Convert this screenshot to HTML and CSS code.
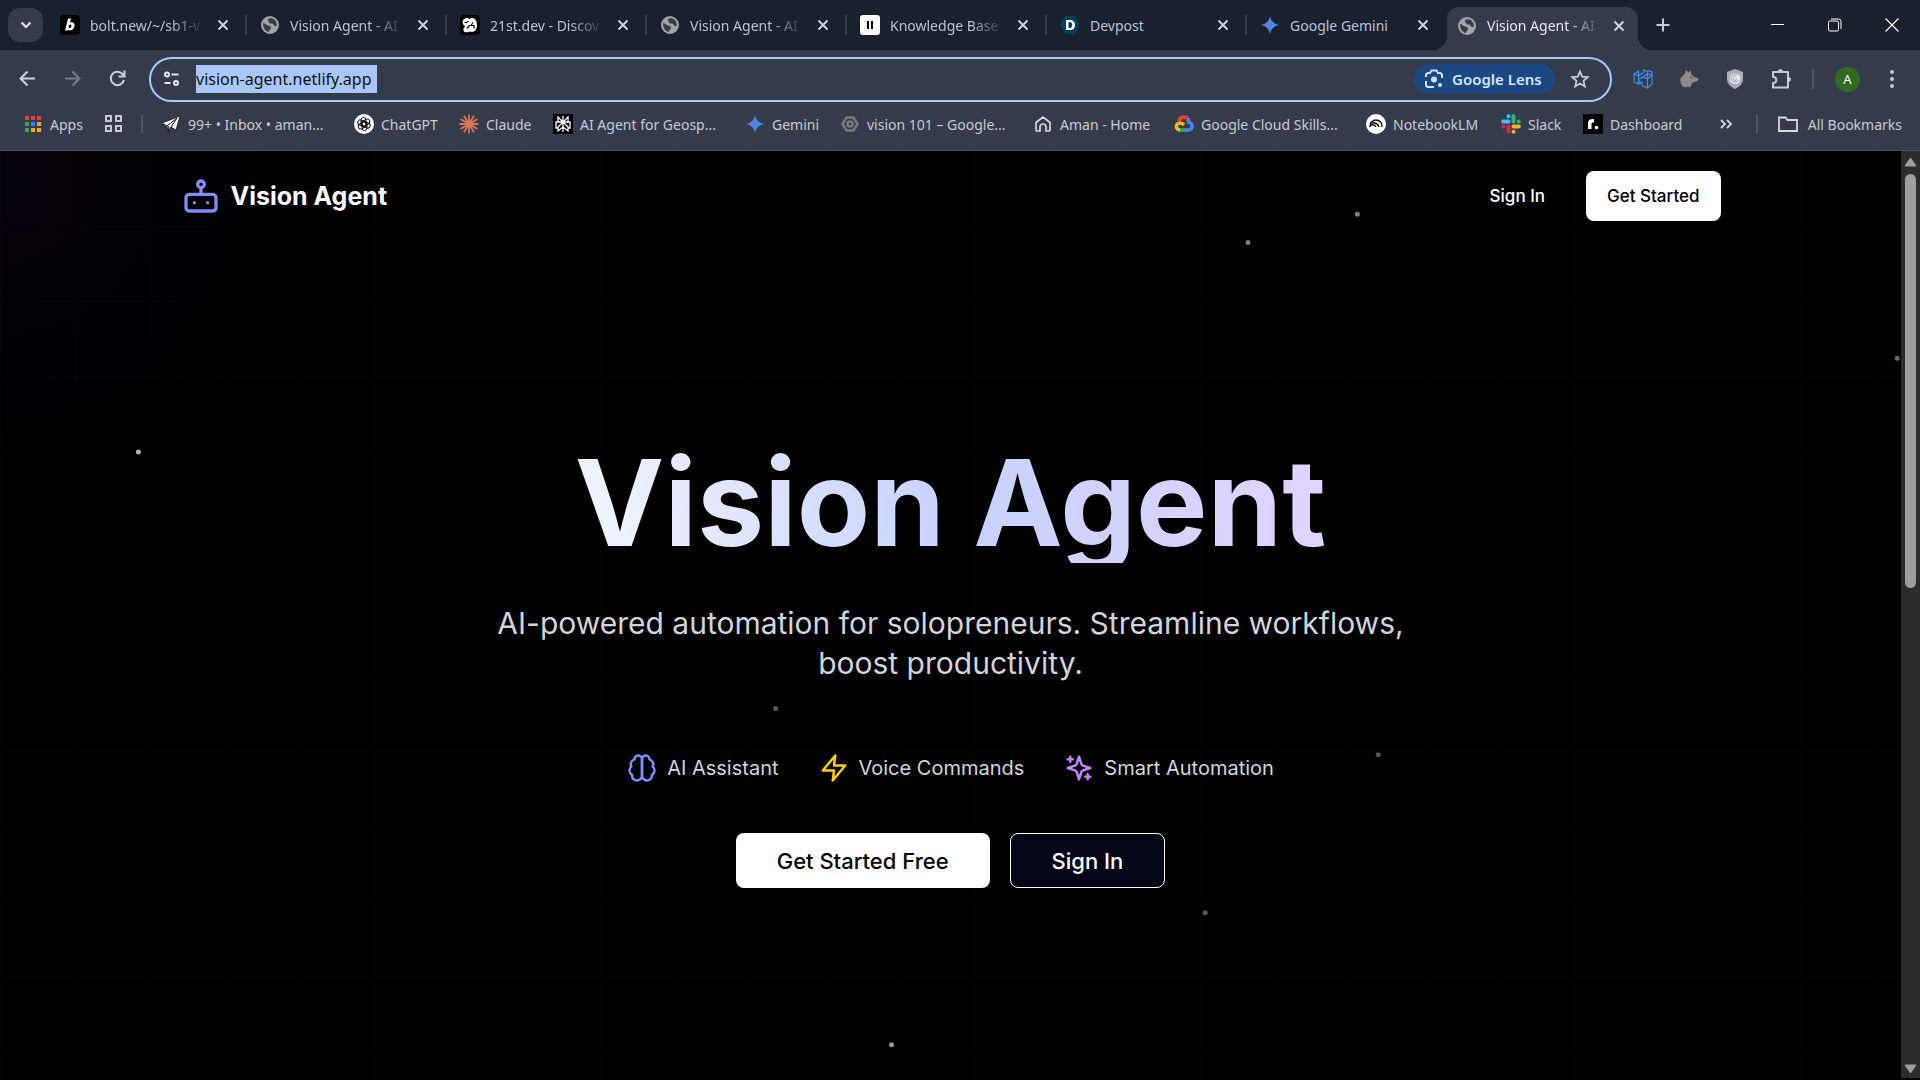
FILE: index.html
```html
<!DOCTYPE html>
<html lang="en">
  <head>
    <meta charset="UTF-8">
    <title>Vision Agent</title>
    <link rel="stylesheet" href="styles.css">
  </head>
  <body>
    <!-- shared icons -->
    <svg class="defs" width="0" height="0">
      <defs>
        <linearGradient id="gem" x1="0" y1="0" x2="1" y2="0">
          <stop offset="0" stop-color="#9b72cb"/>
          <stop offset="0.45" stop-color="#4a86e0"/>
          <stop offset="1" stop-color="#2fa5e8"/>
        </linearGradient>
      </defs>
      <symbol id="close" viewBox="0 0 16 16"><path d="M3.500 3.500l9 9M12.500 3.500l-9 9" stroke="currentColor" stroke-width="2" fill="none"/></symbol>
      <symbol id="globe" viewBox="0 0 20 20">
        <circle cx="10" cy="10" r="9" fill="#a0a3a8"/>
        <path d="M3 8c2.500 0 3 2.500 5 2.500s3 1 3 2.500-2 1.500-2 4C5.500 16.500 3 13 3 8zM10.500 3.200c-3 .3-3 2-2 3s.5 2.300 2 2.300h2c1 0 1 2.500 2.500 2.500h1.800C17 6.500 14.500 3 10.500 3.200z" fill="#343c4b"/>
      </symbol>
      <symbol id="gemini" viewBox="0 0 20 20"><path d="M10 1c.8 5 4 8.200 9 9-5 .8-8.200 4-9 9-.8-5-4-8.200-9-9 5-.8 8.200-4 9-9z" fill="url(#gem)"/></symbol>
    </svg>

    <header class="browser">
      <nav class="tab-strip" aria-label="Tabs">
        <button class="tab-search" aria-label="Search tabs"><svg viewBox="0 0 16 16" width="16" height="16"><path d="M3.500 5.500L8 10l4.500-4.500" stroke="#e3e6ed" stroke-width="2.200" fill="none"/></svg></button>
        <div class="tab">
          <svg class="favicon" viewBox="0 0 20 20"><rect width="20" height="20" rx="4" fill="#000"/><path d="M8 3.500h3l-1 4c3-1 5 .5 4.500 3.500-.5 4-4.500 5.500-6.500 3.500l-.4 1H5zM9 10.500c-.8 2.500.3 3 1.300 2.500 1.300-.7 1.700-3.500.3-3.500-.7 0-1.300.3-1.600 1z" fill="#fff" fill-rule="evenodd"/></svg>
          <a href="#" class="tab-title">bolt.new/~/sb1-v</a>
          <button class="tab-close" aria-label="Close tab"><svg width="16" height="16"><use href="#close"/></svg></button>
        </div>
        <div class="tab">
          <svg class="favicon"><use href="#globe"/></svg>
          <a href="#" class="tab-title">Vision Agent - AI</a>
          <button class="tab-close" aria-label="Close tab"><svg width="16" height="16"><use href="#close"/></svg></button>
        </div>
        <div class="tab">
          <svg class="favicon" viewBox="0 0 20 20"><rect width="20" height="20" rx="4" fill="#000"/><path d="M3.500 4.500c1.500-2 4.500-2 6-.5 3-2.500 7.500 0 7.500 6s-4 8-7 6.500c-3 1.500-6 1-6.500-1s.5-3 2-4.500C3 10.500 1.500 7 3.500 4.500z" fill="#fff"/><path d="M4.500 7.500q2.500.5 4-1.500M6.500 13q2 0 3-3M13 7.500L11 10.500h3v3" fill="none" stroke="#000" stroke-width="1.200"/></svg>
          <a href="#" class="tab-title">21st.dev - Discov</a>
          <button class="tab-close" aria-label="Close tab"><svg width="16" height="16"><use href="#close"/></svg></button>
        </div>
        <div class="tab">
          <svg class="favicon"><use href="#globe"/></svg>
          <a href="#" class="tab-title">Vision Agent - AI</a>
          <button class="tab-close" aria-label="Close tab"><svg width="16" height="16"><use href="#close"/></svg></button>
        </div>
        <div class="tab">
          <svg class="favicon" viewBox="0 0 20 20"><rect width="20" height="20" rx="3" fill="#fff"/><path d="M7 6h2v8H7zM11 6h2v8h-2z" fill="#000"/></svg>
          <a href="#" class="tab-title">Knowledge Base</a>
          <button class="tab-close" aria-label="Close tab"><svg width="16" height="16"><use href="#close"/></svg></button>
        </div>
        <div class="tab">
          <svg class="favicon" viewBox="0 0 20 20"><path d="M5 1h10l5 9-5 9H5l-5-9z" fill="#073f54"/><path d="M6 5h4c3 0 5 2 5 5s-2 5-5 5H6zM8.500 7v6H10c3 0 3-6 0-6z" fill="#fff" fill-rule="evenodd"/></svg>
          <a href="#" class="tab-title plain">Devpost</a>
          <button class="tab-close" aria-label="Close tab"><svg width="16" height="16"><use href="#close"/></svg></button>
        </div>
        <div class="tab tab-last">
          <svg class="favicon"><use href="#gemini"/></svg>
          <a href="#" class="tab-title plain">Google Gemini</a>
          <button class="tab-close" aria-label="Close tab"><svg width="16" height="16"><use href="#close"/></svg></button>
        </div>
        <div class="tab active">
          <svg class="favicon"><use href="#globe"/></svg>
          <a href="#" class="tab-title">Vision Agent - AI</a>
          <button class="tab-close" aria-label="Close tab"><svg width="16" height="16"><use href="#close"/></svg></button>
        </div>
        <button class="new-tab" aria-label="New tab"><svg width="16" height="16" viewBox="0 0 16 16"><path d="M8 1.500v13M1.500 8h13" stroke="#c3cbde" stroke-width="2"/></svg></button>
        <div class="window-controls">
          <button aria-label="Minimize"><svg width="14" height="14"><path d="M0 6.500h13" stroke="#fff"/></svg></button>
          <button aria-label="Restore"><svg width="14" height="14" viewBox="0 0 14 14" fill="none" stroke="#fff"><rect x="0.500" y="3" width="10" height="10" rx="1.500"/><path d="M3 1h7.500q2.500 0 2.500 2.500V11"/></svg></button>
          <button aria-label="Close"><svg width="14" height="14"><path d="M.5.5l13 13M13.500.5l-13 13" stroke="#fff" stroke-width="1.200"/></svg></button>
        </div>
      </nav>

      <div class="toolbar">
        <div class="nav-buttons">
          <button aria-label="Back"><svg width="20" height="20" fill="none" stroke="#c9d0e0" stroke-width="2"><path d="M17 9.500H3M9.500 2.500l-7 7 7 7"/></svg></button>
          <button aria-label="Forward"><svg width="20" height="20" fill="none" stroke="#767d8c" stroke-width="2"><path d="M2 9.500h14M9.500 2.500l7 7-7 7"/></svg></button>
          <button aria-label="Reload"><svg width="20" height="20" fill="none" stroke="#c9d0e0" stroke-width="2"><path d="M16 11a6.700 6.700 0 1 1-1.500-6l2 2M16.500 1.500v6h-6"/></svg></button>
        </div>
        <div class="omnibox">
          <svg width="16" height="16" fill="none" stroke="#e3e6ed" stroke-width="2"><circle cx="3" cy="3.500" r="2"/><path d="M7.500 3.500h7M.5 12h6"/><circle cx="12" cy="12" r="2"/></svg>
          <input class="url" type="text" aria-label="Address" value="vision-agent.netlify.app">
          <button class="lens">
            <svg width="20" height="20" fill="none" stroke="#d3e3fd" stroke-width="2"><path d="M2 8V6.500A2.500 2.500 0 0 1 4.500 4H6l1.500-2.500h5L14 4h1.500A2.500 2.500 0 0 1 18 6.500V9M2 12v3.500A2.500 2.500 0 0 0 4.500 18H10"/><circle cx="10" cy="10.500" r="3" fill="#d3e3fd" stroke="none"/><circle cx="16" cy="16" r="2" fill="#d3e3fd" stroke="none"/></svg>
            Google Lens
          </button>
          <button class="star" aria-label="Bookmark this tab"><svg width="20" height="20" fill="none" stroke="#c9d0e0" stroke-width="1.700"><path d="M10 2.500l2.200 5.200 5.600.5-4.300 3.700 1.300 5.500L10 14.500l-4.800 2.900 1.300-5.500L2.200 8.200l5.600-.5z"/></svg></button>
        </div>
        <div class="extensions">
          <button aria-label="Boxes extension"><svg width="20" height="20" fill="none" stroke="#3c8cf5" stroke-width="1.200"><path d="M1 5l4.500 2v8L1 13zM1 5l4.500-3v5l5-3.500M5.500 10.500L10 8l4.500 2v9L10 17zM10 8l4.500-3.500L19 6l-4.500 4M19 6v9l-4.500 4M5.500 15l4.500-2M5.500 10.500V7l5-3.500V1l4 1.500v7.500M15 1.500l4 1.500v3"/></svg></button>
          <button aria-label="Fox extension"><svg width="20" height="20"><path d="M3.500 17.500q-3-5-2-8.500l4-4 1.500-4 2.500 2.500L11.500 1.500l1 4 2.500 2.500 4.500 1.500-1 2.500-5 1.500q-2 3.500-2.500 5.500l-2-2-1.500 1.500z" fill="#8f8b87"/><path d="M11 8l2 .8" stroke="#45423f"/></svg></button>
          <button aria-label="Shield extension"><svg width="20" height="20"><path d="M10 0l8 3v7c0 5-4 8-8 10-4-2-8-5-8-10V3z" fill="#a9adb4"/><circle cx="10" cy="9.500" r="5.500" fill="#e7e9ec"/><path d="M13 6.500a4 4 0 1 0 .5 4.500M12 10a2 2 0 1 1-1-2.500" fill="none" stroke="#999da5"/></svg></button>
          <button aria-label="Extensions"><svg width="20" height="20" viewBox="0 0 20 20" fill="none" stroke="#c3cbde" stroke-width="2"><path d="M2 3h15v15.500H2V14c4.500 0 4.500-6 0-6z" stroke-linejoin="round"/><path d="M7.500 2.500a2 2 0 0 1 4 0zM17.500 8.500a2 2 0 0 1 0 4z" fill="#c3cbde" stroke-width="1"/></svg></button>
        </div>
        <span class="divider"></span>
        <button class="avatar" aria-label="Profile">A</button>
        <button class="menu" aria-label="Menu"><svg width="4" height="18" fill="#c3cbde"><circle cx="2" cy="2" r="2"/><circle cx="2" cy="9" r="2"/><circle cx="2" cy="16" r="2"/></svg></button>
      </div>

      <nav class="bookmarks" aria-label="Bookmarks">
        <a href="#"><svg viewBox="0 0 20 20"><path d="M2 2h4v4H2zM8 2h4v4H8zM14 2h4v4h-4z" fill="#ea4335"/><path d="M2 8h4v4H2zM2 14h4v4H2z" fill="#34a853"/><path d="M8 8h4v4H8z" fill="#1a8cff"/><path d="M14 8h4v4h-4zM8 14h4v4H8zM14 14h4v4h-4z" fill="#f9ab00"/></svg>Apps</a>
        <a href="#" aria-label="Tab groups"><svg viewBox="0 0 20 20" fill="none" stroke="#c4c8d2" stroke-width="2"><path d="M3 2h5v5H3zM13 2h5v5h-5zM3 12h5v5H3zM13 12h5v5h-5z"/></svg></a>
        <span class="divider"></span>
        <a href="#"><svg viewBox="0 0 20 20"><path d="M1 9L19 2l-4 14-5-3-3 5-1-6z" fill="#fff" stroke="#111" stroke-width="0.800"/><path d="M6 12l10-8-6 9M7 18l1-6" fill="none" stroke="#111"/></svg>99+ • Inbox • aman...</a>
        <a href="#"><svg viewBox="0 0 20 20"><circle cx="10" cy="10" r="10" fill="#fff"/><g fill="none" stroke="#111"><rect x="7" y="3.500" width="5" height="9" rx="2.500"/><rect x="7" y="3.500" width="5" height="9" rx="2.500" transform="rotate(60 10 10)"/><rect x="7" y="3.500" width="5" height="9" rx="2.500" transform="rotate(120 10 10)"/><rect x="7" y="3.500" width="5" height="9" rx="2.500" transform="rotate(180 10 10)"/><rect x="7" y="3.500" width="5" height="9" rx="2.500" transform="rotate(240 10 10)"/><rect x="7" y="3.500" width="5" height="9" rx="2.500" transform="rotate(300 10 10)"/></g></svg>ChatGPT</a>
        <a href="#"><svg viewBox="0 0 20 20" stroke="#d97757" stroke-width="1.800"><path d="M10 0.500v19M0.500 10h19M5 1.800l10 16.400M15 1.800L5 18.200M1.500 5l17 10M18.500 5l-17 10"/></svg>Claude</a>
        <a href="#"><svg viewBox="0 0 20 20"><rect width="20" height="20" fill="#000"/><path d="M10 2v16M5 3l5 5 5-5v5H5zM5 8H3v6h2M15 8h2v6h-2M10 8l-5 5v4l5-4 5 4v-4z" fill="none" stroke="#fff" stroke-width="1.300"/></svg>AI Agent for Geosp...</a>
        <a href="#"><svg><use href="#gemini"/></svg>Gemini</a>
        <a href="#"><svg viewBox="0 0 20 20" fill="none" stroke="#777a7f" stroke-width="2.500"><path d="M6.500 3.500h7l4 6.500-4 6.500h-7L2.500 10z"/><circle cx="10" cy="10" r="2.500"/></svg>vision 101 – Google...</a>
        <a href="#"><svg viewBox="0 0 20 20" fill="none" stroke="#d5d8de" stroke-width="1.700"><path d="M3 8.500L10 3l7 5.500V16q0 1-1 1h-3v-4a3 3 0 0 0-6 0v4H4q-1 0-1-1z"/></svg>Aman - Home</a>
        <a href="#"><svg viewBox="0 0 20 20" fill="none" stroke-width="3.600"><path d="M5 7c1-5 8-5 9.500-1" stroke="#ea4335"/><path d="M13.500 5c1 1 1.500 2 1.500 3.500 4.500.5 4 7.500-1 7.500h-3" stroke="#4285f4"/><path d="M12 16H5" stroke="#34a853"/><path d="M6 16c-4.500 0-5-7 0-7 2 0 3 1 4 2" stroke="#fbbc04"/></svg>Google Cloud Skills...</a>
        <a href="#"><svg viewBox="0 0 20 20"><circle cx="10" cy="10" r="10" fill="#fff"/><path d="M4 13v-1a6 6 0 0 1 12 0v1M4 9.500a6 5 0 0 1 9 3.500M4 12a3.500 3.500 0 0 1 6 1" fill="none" stroke="#111" stroke-width="1.400"/></svg>NotebookLM</a>
        <a href="#"><svg viewBox="0 0 20 20" fill="none" stroke-width="4" stroke-linecap="round"><path d="M2.200 7.500h5.300M7.500 2.300h.1" stroke="#36c5f0"/><path d="M12.500 2.200v5.300M17.700 7.500h.1" stroke="#2eb67d"/><path d="M12.500 12.600h5.300M12.500 17.800h.1" stroke="#ecb22e"/><path d="M7.500 12.600v5.200M2.300 12.600h.1" stroke="#e01e5a"/></svg>Slack</a>
        <a href="#"><svg viewBox="0 0 20 20"><rect width="20" height="20" fill="#000"/><path d="M5 15V9q0-4 5-4h1v3.500H9.500Q8.500 8.500 8.500 10v5z" fill="#fff"/><circle cx="13.500" cy="13.500" r="1.800" fill="#fff"/></svg>Dashboard</a>
        <div class="bookmarks-end">
          <button aria-label="More bookmarks"><svg viewBox="0 0 20 20" fill="none" stroke="#d5d8de" stroke-width="1.800"><path d="M5 6l4 4-4 4M11 6l4 4-4 4"/></svg></button>
          <span class="divider"></span>
          <a href="#"><svg viewBox="0 0 20 20" fill="none" stroke="#d5d8de" stroke-width="1.800"><path d="M1 3.500h6.500l2 2.500H19v11H1z"/></svg>All Bookmarks</a>
        </div>
      </nav>
    </header>

    <div class="viewport">
      <div class="page">
        <svg class="particles" fill="#fff">
          <circle cx="71.400%" cy="6.800%" r="2.500" opacity="0.500"/>
          <circle cx="65.650%" cy="9.850%" r="2.500" opacity="0.500"/>
          <circle cx="99.800%" cy="22.300%" r="2.500" opacity="0.400"/>
          <circle cx="7.280%" cy="32.400%" r="2.500" opacity="0.700"/>
          <circle cx="40.800%" cy="60%" r="2.500" opacity="0.350"/>
          <circle cx="72.500%" cy="65%" r="2.500" opacity="0.350"/>
          <circle cx="63.400%" cy="82%" r="2.500" opacity="0.350"/>
          <circle cx="46.900%" cy="96.200%" r="2.500" opacity="0.600"/>
        </svg>
        <header class="site-header">
          <a href="#" class="logo">
            <svg class="icon-bot" viewBox="0 0 24 24"><rect x="3" y="11" width="18" height="10" rx="2"/><circle cx="12" cy="5" r="2"/><path d="M12 7v4M8 16v.01M16 16v.01"/></svg>
            Vision Agent
          </a>
          <div class="site-nav">
            <button class="btn btn-ghost">Sign In</button>
            <button class="btn btn-light">Get Started</button>
          </div>
        </header>

        <main class="hero">
          <h1>Vision Agent</h1>
          <p class="tagline">AI-powered automation for solopreneurs. Streamline workflows, boost productivity.</p>
          <ul class="features">
            <li>
              <svg class="indigo" viewBox="0 0 24 24"><path d="M12 5a3 3 0 1 0-5.997.125 4 4 0 0 0-2.526 5.770 4 4 0 0 0 .556 6.588A4 4 0 1 0 12 18Z"/><path d="M12 5a3 3 0 1 1 5.997.125 4 4 0 0 1 2.526 5.770 4 4 0 0 1-.556 6.588A4 4 0 1 1 12 18Z"/></svg>
              AI Assistant
            </li>
            <li>
              <svg class="yellow" viewBox="0 0 24 24"><path d="M13 2L3 14h9l-1 8 10-12h-9z"/></svg>
              Voice Commands
            </li>
            <li>
              <svg class="purple" viewBox="0 0 24 24"><path d="m12 3-1.912 5.813a2 2 0 0 1-1.275 1.275L3 12l5.813 1.912a2 2 0 0 1 1.275 1.275L12 21l1.912-5.813a2 2 0 0 1 1.275-1.275L21 12l-5.813-1.912a2 2 0 0 1-1.275-1.275Z"/><path d="M5 3v4M19 17v4M3 5h4M17 19h4"/></svg>
              Smart Automation
            </li>
          </ul>
          <div class="actions">
            <button class="btn btn-light btn-lg">Get Started Free</button>
            <button class="btn btn-outline btn-lg">Sign In</button>
          </div>
        </main>
      </div>
      <div class="scrollbar">
        <svg width="13" height="10"><path d="M6.500 1L12 9H1z" fill="#9f9f9f" stroke="#9f9f9f" stroke-linejoin="round"/></svg>
        <div class="track"><div class="thumb"></div></div>
        <svg width="13" height="10"><path d="M6.500 9L12 1H1z" fill="#9f9f9f" stroke="#9f9f9f" stroke-linejoin="round"/></svg>
      </div>
    </div>
  </body>
</html>
```
FILE: styles.css
```css
* {
  box-sizing: border-box;
}

body {
  margin: 0;
  min-height: 100vh;
  display: flex;
  flex-direction: column;
  background: #000;
  font-family: Inter, "Liberation Sans", sans-serif;
}

button {
  padding: 0;
  border: none;
  background: none;
  color: inherit;
  font: inherit;
  cursor: pointer;
}

a {
  color: inherit;
  text-decoration: none;
}

svg {
  display: block;
  flex-shrink: 0;
}

.defs {
  position: absolute;
}

/* browser window */
.browser {
  background: #343c4b;
  border-bottom: 1px solid #4b525f;
  color: #c7cbd4;
  font-family: "Noto Sans", "Open Sans", sans-serif;
  font-size: 14px;
  white-space: nowrap;
}

.tab-strip {
  display: flex;
  height: 50px;
  padding-left: 8px;
  background: #19212f;
  color: #b8c2d8;
}

.tab-search {
  display: flex;
  align-items: center;
  justify-content: center;
  width: 35px;
  height: 34px;
  margin: 8px 4px 0 0;
  border-radius: 12px;
  background: #343c4b;
}

.tab {
  position: relative;
  display: flex;
  align-items: center;
  width: 200px;
  height: 50px;
  padding: 0 16px 0 13px;
}

.tab::after {
  content: "";
  position: absolute;
  right: 0;
  width: 2px;
  height: 20px;
  background: #343c4b;
}

.tab-last::after {
  display: none;
}

.favicon {
  width: 20px;
  height: 20px;
}

.tab-title {
  flex: 1;
  margin: 0 10px;
  mask-image: linear-gradient(to right, #000 70%, transparent);
}

.tab-title.plain {
  mask-image: none;
}

.tab-close {
  color: #c9d2e6;
}

.tab.active {
  width: 191px;
  height: 43px;
  margin-top: 7px;
  padding: 0 11px 6px 10px;
  border-radius: 12px 12px 0 0;
  background: #343c4b;
  color: #e3e6ed;
}

.tab.active::before,
.tab.active::after {
  content: "";
  position: absolute;
  bottom: 0;
  width: 14px;
  height: 14px;
}

.tab.active::before {
  right: 100%;
  background: radial-gradient(circle at 0 0, #19212f 14px, #343c4b 14px);
}

.tab.active::after {
  left: 100%;
  right: auto;
  background: radial-gradient(circle at 100% 0, #19212f 14px, #343c4b 14px);
}

.new-tab {
  display: flex;
  align-items: center;
  justify-content: center;
  width: 50px;
}

.window-controls {
  display: flex;
  margin-left: auto;
}

.window-controls button {
  display: flex;
  align-items: center;
  justify-content: center;
  width: 57px;
}

.toolbar {
  display: flex;
  align-items: center;
  height: 58px;
  padding: 0 12px 0 18px;
}

.nav-buttons {
  display: flex;
  gap: 25px;
  width: 131px;
}

.omnibox {
  display: flex;
  flex: 1;
  align-items: center;
  height: 45px;
  padding: 0 20px 0 13px;
  border: 2px solid #a8c7fa;
  border-radius: 23px;
}

.url {
  width: 181px;
  height: 28px;
  margin-left: 16px;
  padding: 0;
  border: none;
  background: #a8c7fa;
  color: #111;
  font: 16px "Noto Sans", "Open Sans", sans-serif;
}

.lens {
  display: flex;
  align-items: center;
  gap: 8px;
  width: 141px;
  height: 30px;
  margin-left: auto;
  padding-left: 10px;
  border-radius: 15px;
  background: #1b4880;
  color: #d3e3fd;
  font-size: 15px;
  font-weight: 600;
}

.star {
  margin-left: 15px;
}

.extensions {
  display: flex;
  gap: 26px;
  margin: 0 21px;
}

.divider {
  width: 2px;
  height: 20px;
  background: #4d5566;
}

.avatar {
  width: 25px;
  height: 25px;
  margin-left: 21px;
  border-radius: 50%;
  background: #2f6b1c;
  color: #fff;
  font-size: 13px;
}

.menu {
  margin: 0 14px 0 30px;
}

.bookmarks {
  display: grid;
  grid-template-columns: 80px 38px 20px 193px 105px 94px 192px 95px 193px 141px 192px 135px 82px 100px 1fr;
  align-items: center;
  height: 42px;
  padding: 0 18px 10px 23px;
}

.bookmarks a {
  display: flex;
  align-items: center;
  gap: 7px;
}

.bookmarks svg {
  width: 20px;
  height: 20px;
}

.bookmarks-end {
  display: flex;
  justify-content: flex-end;
  align-items: center;
  gap: 20px;
}

.bookmarks-end a {
  gap: 10px;
}

/* landing page */
.viewport {
  display: flex;
  flex: 1;
}

.page {
  position: relative;
  flex: 1;
  background-image:
    linear-gradient(to right, rgba(255, 255, 255, 0.009) 1px, transparent 1px),
    linear-gradient(to bottom, rgba(255, 255, 255, 0.009) 1px, transparent 1px),
    radial-gradient(circle at 0 30px, #05030a, #000 300px);
  background-size: 75px 75px, 75px 75px, auto;
}

.particles {
  position: absolute;
  inset: 0;
  width: 100%;
  height: 100%;
}

.site-header {
  position: relative;
  display: flex;
  justify-content: space-between;
  align-items: center;
  max-width: 1600px;
  margin: 0 auto;
  padding: 20px 30px;
}

.logo {
  display: flex;
  align-items: center;
  gap: 10px;
  color: #fff;
  font-size: 25px;
  font-weight: 700;
}

.icon-bot {
  width: 40px;
  height: 40px;
}

.icon-bot,
.features svg {
  fill: none;
  stroke: #818cf8;
  stroke-width: 2;
  stroke-linecap: round;
  stroke-linejoin: round;
}

.site-nav {
  display: flex;
  gap: 20px;
}

.btn {
  height: 50px;
  padding: 0 21px;
  border-radius: 8px;
  font-size: 17px;
  font-weight: 500;
}

.btn-ghost {
  color: #fff;
}

.btn-light {
  background: #fff;
  color: #000;
}

.btn-outline {
  border: 1px solid #fff;
  background: #020617;
  color: #fff;
}

.btn-lg {
  height: 55px;
  padding: 0 41px;
  font-size: 22px;
}

.hero {
  position: relative;
  display: flex;
  flex-direction: column;
  align-items: center;
  max-width: 960px;
  margin: 0 auto;
  padding: 202px 0 190px;
  text-align: center;
}

h1 {
  width: 100%;
  margin: 0 0 40px;
  font-size: 120px;
  font-weight: 700;
  line-height: 120px;
  background: linear-gradient(80deg, #fff, #c7d2fe, #e9d5ff);
  background-clip: text;
  color: transparent;
}

.tagline {
  margin: 0;
  color: #d1d5db;
  font-size: 30px;
  line-height: 40px;
}

.features {
  display: flex;
  gap: 40px;
  margin: 70px 0 50px;
  padding: 0;
  list-style: none;
  color: #d1d5db;
  font-size: 20px;
}

.features li {
  display: flex;
  align-items: center;
  gap: 10px;
}

.features svg {
  width: 30px;
  height: 30px;
}

.features .indigo {
  stroke: #818cf8;
}

.features .yellow {
  stroke: #facc15;
}

.features .purple {
  stroke: #c084fc;
}

.actions {
  display: flex;
  gap: 20px;
}

.scrollbar {
  display: flex;
  flex-direction: column;
  align-items: center;
  width: 19px;
  margin-bottom: 2px;
  padding: 6px 0 4px;
  background: #2c2c2c;
}

.track {
  flex: 1;
  padding-top: 7px;
}

.thumb {
  width: 11px;
  height: 414px;
  border-radius: 6px;
  background: #9f9f9f;
}
```
